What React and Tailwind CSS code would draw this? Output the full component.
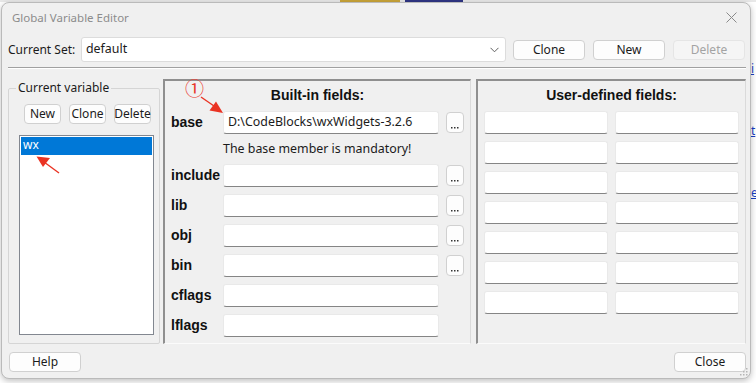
import React from "react";

const ui = { fontFamily: '"Noto Sans", "Open Sans", sans-serif' };
const bold = { fontFamily: '"Liberation Sans", Arial, sans-serif' };

function Btn({ children, className = "", disabled = false }) {
  return (
    <div
      className={
        "flex items-center justify-center h-[20px] rounded-[4px] border text-[12px] leading-none " +
        (disabled
          ? "bg-[#f5f5f5] border-[#e5e5e5] text-[#a3a3a3] "
          : "bg-[#fdfdfd] border-[#d0d0d0] text-[#1b1b1b] ") +
        className
      }
    >
      {children}
    </div>
  );
}

function Field({ className = "", children }) {
  return (
    <div
      className={
        "h-[23px] bg-white border border-[#e9e9e9] border-b-[#858585] rounded-[3px] flex items-center pl-[4px] text-[12.4px] text-[#1b1b1b] " +
        className
      }
    >
      {children}
    </div>
  );
}

function Dots() {
  return (
    <div className="w-[18px] h-[21px] bg-[#fdfdfd] border border-[#d0d0d0] rounded-[4px] flex items-end justify-center pb-[3px]">
      <svg width="8" height="2" viewBox="0 0 8 2">
        <rect x="0" y="0" width="1.5" height="1.5" fill="#333" />
        <rect x="3" y="0" width="1.5" height="1.5" fill="#333" />
        <rect x="6" y="0" width="1.5" height="1.5" fill="#333" />
      </svg>
    </div>
  );
}

function Row({ label, dots = true, children }) {
  return (
    <div className="flex items-center h-[23px]">
      <div className="w-[52px] text-[14px] font-bold text-[#111]" style={bold}>
        {label}
      </div>
      <Field className="w-[216px]">{children}</Field>
      {dots ? (
        <div className="ml-[7px]">
          <Dots />
        </div>
      ) : null}
    </div>
  );
}

export default function App() {
  return (
    <div className="relative w-[756px] h-[383px] bg-white overflow-hidden" style={ui}>
      {/* background desktop fragments */}
      <div className="absolute left-0 top-0 w-[756px] h-[2px] bg-[#e8e8e8]" />
      <div className="absolute left-[340px] top-0 w-[60px] h-[2px] bg-[#c9a43a]" />
      <div className="absolute left-[405px] top-0 w-[58px] h-[2px] bg-[#2f3584]" />
      <div className="absolute left-[751px] top-[62px] w-[5px] overflow-hidden text-[12px] leading-[14px] text-[#1a3fc2] underline">i</div>
      <div className="absolute left-[751px] top-[124px] w-[5px] overflow-hidden text-[12px] leading-[14px] text-[#1a3fc2] underline">t</div>
      <div className="absolute left-[751px] top-[186px] w-[5px] overflow-hidden text-[12px] leading-[14px] text-[#1a3fc2] underline">e</div>

      {/* window */}
      <div className="absolute left-[1px] top-[2px] w-[750px] h-[377px] rounded-[8px] border border-[#bababa] bg-[#f0f0f0] shadow-[0_2px_6px_rgba(0,0,0,0.25)] flex flex-col">
        {/* title bar */}
        <div className="h-[29px] flex items-center justify-between pl-[10px] pr-[9px]">
          <span className="text-[11.5px] text-[#8c8c8c]">Global Variable Editor</span>
          <svg width="11" height="11" viewBox="0 0 11 11" className="mr-[4px]">
            <path d="M0.5 0.5 L10.5 10.5 M10.5 0.5 L0.5 10.5" stroke="#8a8a8a" strokeWidth="1" />
          </svg>
        </div>

        {/* current set row */}
        <div className="mt-[5px] h-[25px] flex items-center pl-[6px]">
          <div className="w-[73px] text-[12px] text-[#1b1b1b]">Current Set:</div>
          <div className="w-[425px] h-[25px] bg-white border border-[#dcdcdc] rounded-[3px] flex items-center justify-between pl-[4px] pr-[6px] text-[12.4px] text-[#1b1b1b]">
            <span>default</span>
            <svg width="9" height="6" viewBox="0 0 9 6">
              <path d="M0.5 0.8 L4.5 4.8 L8.5 0.8" stroke="#606060" strokeWidth="1" fill="none" />
            </svg>
          </div>
          <Btn className="ml-[7px] w-[72px]">Clone</Btn>
          <Btn className="ml-[8px] w-[72px]">New</Btn>
          <Btn className="ml-[8px] w-[72px]" disabled>Delete</Btn>
        </div>

        {/* separator */}
        <div className="mt-[5px] ml-[6px] w-[738px] h-[2px] border-t border-[#a0a0a0] border-b border-b-white" />

        {/* main */}
        <div className="mt-[10px] h-[265px] flex pl-[6px]">
          <fieldset className="w-[152px] h-[264px] mt-[1px] border border-[#d5d5d5] rounded-[2px]">
            <legend className="ml-[7px] px-[2px] text-[12px] leading-[16px] text-[#1b1b1b]">Current variable</legend>
            <div className="mt-[8px] ml-[15px] flex gap-[8px]">
              <Btn className="w-[37px]">New</Btn>
              <Btn className="w-[37px]">Clone</Btn>
              <Btn className="w-[37px]">Delete</Btn>
            </div>
            <div className="mt-[11px] ml-[10px] w-[135px] h-[200px] bg-white border border-[#828790] p-[1px]">
              <div className="h-[18px] bg-[#0078d7] text-white text-[12px] leading-[16px] pl-[2px]">wx</div>
            </div>
          </fieldset>

          {/* built-in */}
          <div className="ml-[3px] w-[308px] h-[265px] border-t-2 border-l-2 border-t-[#8f8f8f] border-l-[#8f8f8f] border-r border-b border-r-[#dadada] border-b-[#fbfbfb] flex flex-col">
            <div className="h-[28px] flex items-center justify-center text-[14px] font-bold text-[#111]" style={bold}>
              Built-in fields:
            </div>
            <div className="mt-[2px] pl-[6px] flex flex-col">
              <Row label="base">D:\CodeBlocks\wxWidgets-3.2.6</Row>
              <div className="h-[30px] flex items-center pl-[52px] text-[12.4px] text-[#1b1b1b]">
                The base member is mandatory!
              </div>
              <div className="flex flex-col gap-[7px]">
                <Row label="include" />
                <Row label="lib" />
                <Row label="obj" />
                <Row label="bin" />
                <Row label="cflags" dots={false} />
                <Row label="lflags" dots={false} />
              </div>
            </div>
          </div>

          {/* user-defined */}
          <div className="ml-[5px] w-[270px] h-[265px] border-t-2 border-l-2 border-t-[#8f8f8f] border-l-[#8f8f8f] border-r border-b border-r-[#dadada] border-b-[#fbfbfb] flex flex-col">
            <div className="h-[28px] flex items-center justify-center text-[14px] font-bold text-[#111]" style={bold}>
              User-defined fields:
            </div>
            <div className="mt-[2px] pl-[6px] grid grid-cols-[124px_124px] gap-x-[7px] gap-y-[7px]">
              {Array.from({ length: 14 }).map((_, i) => (
                <Field key={i} />
              ))}
            </div>
          </div>
        </div>

        {/* bottom buttons */}
        <div className="mt-[8px] flex justify-between pl-[7px] pr-[4px]">
          <Btn className="w-[72px]">Help</Btn>
          <Btn className="w-[72px]">Close</Btn>
        </div>

        {/* resize grip */}
        <svg className="absolute right-[2px] bottom-[2px]" width="8" height="8" viewBox="0 0 8 8">
          <rect x="6" y="0" width="1.5" height="1.5" fill="#b5b5b5" />
          <rect x="3" y="3" width="1.5" height="1.5" fill="#b5b5b5" />
          <rect x="6" y="3" width="1.5" height="1.5" fill="#b5b5b5" />
          <rect x="0" y="6" width="1.5" height="1.5" fill="#b5b5b5" />
          <rect x="3" y="6" width="1.5" height="1.5" fill="#b5b5b5" />
          <rect x="6" y="6" width="1.5" height="1.5" fill="#b5b5b5" />
        </svg>
      </div>

      {/* red annotations */}
      <div
        className="absolute left-[185px] top-[77px] text-[19px] leading-[22px] text-[#e8362a]"
        style={{ fontFamily: '"Noto Sans CJK SC", "DejaVu Sans", sans-serif' }}
      >
        ①
      </div>
      <svg className="absolute left-0 top-0" width="756" height="383" viewBox="0 0 756 383">
        <line x1="201" y1="97" x2="214" y2="106" stroke="#ea3323" strokeWidth="1.4" />
        <polygon points="223,113 209.5,110.5 216,101.5" fill="#ea3323" />
        <line x1="59" y1="173" x2="44" y2="162" stroke="#ea3323" strokeWidth="1.4" />
        <polygon points="36.5,156.5 50,158 43,167" fill="#ea3323" />
      </svg>
    </div>
  );
}
